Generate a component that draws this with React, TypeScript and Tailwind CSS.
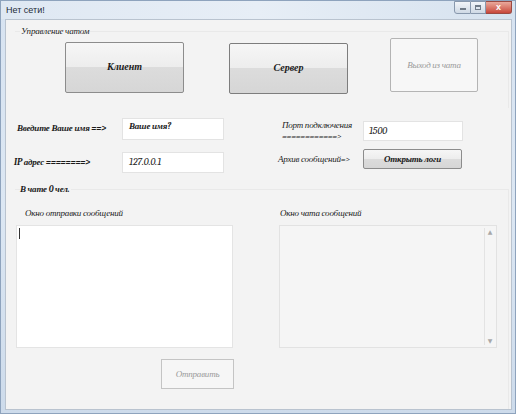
export default function App() {
  const serif = "font-serif italic";
  const label = "font-serif italic text-[9px] tracking-[-0.2px] leading-[11px] whitespace-nowrap";
  const btnBg = "bg-[linear-gradient(#f6f6f6_0%,#ededed_48%,#dcdcdc_50%,#d6d6d6_100%)]";
  return (
    <div className="w-[516px] h-[414px] overflow-hidden bg-gradient-to-b from-[#d7e3f1] via-[#dce7f3] to-[#cddbeb] flex flex-col border border-[#8ea3bd]">
      {/* title bar */}
      <div className="h-[18px] flex items-start justify-between pl-[5px] pr-[3px] bg-gradient-to-r from-[#dfe8f3] via-[#e7eef6] to-[#d6e2ef]">
        <span className="mt-[4px] text-[9px] leading-[10px] text-[#1e2a38] font-['Liberation_Sans',sans-serif]">Нет сети!</span>
        <div className="flex">
          <div className="w-[17px] h-[13px] border border-[#8898ad] rounded-bl-[3px] bg-gradient-to-b from-[#f2f5f9] to-[#cfd9e5] flex items-center justify-center">
            <div className="w-[6px] h-[2px] bg-[#707b88] mt-[3px]" />
          </div>
          <div className="w-[15px] h-[13px] border-y border-r border-[#8898ad] bg-gradient-to-b from-[#f2f5f9] to-[#cfd9e5] flex items-center justify-center">
            <div className="w-[6px] h-[5px] border border-[#707b88] border-t-2" />
          </div>
          <div className="w-[26px] h-[13px] border-y border-r border-[#9b4a42] rounded-br-[3px] bg-gradient-to-b from-[#e9a99c] to-[#c7453a] flex items-center justify-center text-white text-[9px] font-bold leading-none font-['Liberation_Sans',sans-serif]">
            x
          </div>
        </div>
      </div>

      {/* client area */}
      <div className="flex-1 ml-[4px] mr-[3px] mb-[3px] bg-[#f3f3f3] border border-[#b9c3cf] flex flex-col text-[#1a1a1a]">
        {/* group: управление */}
        <div className="relative mt-[11px] ml-[9px] mr-[2px] h-[77px] border-t border-r border-[#e9e9e9]">
          <span className={`absolute -top-[6px] left-[5px] px-[1px] bg-[#f3f3f3] ${label}`}>Управление чатом</span>
          <div className="flex items-start pt-[10px]">
            <button className={`ml-[50px] w-[119px] h-[51px] rounded-[2px] border border-[#8c8c8c] ${btnBg} text-[10px] font-bold ${serif}`}>
              Клиент
            </button>
            <button className={`ml-[45px] mt-[1px] w-[119px] h-[51px] rounded-[2px] border border-[#7d7d7d] ${btnBg} text-[10px] font-bold ${serif}`}>
              Сервер
            </button>
            <button className={`ml-[42px] -mt-[4px] w-[88px] h-[54px] rounded-[2px] border border-[#b4b4b4] bg-[#f7f7f7] text-[#9a9a9a] ${label}`}>
              Выход из чата
            </button>
          </div>
        </div>

        {/* connection settings */}
        <div className="flex mt-[9px]">
          <div className="flex flex-col">
            <div className="flex items-center h-[23px]">
              <span className={`ml-[11px] w-[105px] font-bold ${label}`}>Введите Ваше имя ==&gt;</span>
              <div className={`w-[102px] h-[22px] bg-white border border-[#e3e3e3] px-[6px] pt-[2px] font-bold ${label}`}>Ваше имя?</div>
            </div>
            <div className="flex items-center h-[21px] mt-[12px]">
              <span className={`ml-[8px] w-[108px] font-bold ${label}`}>IP адрес ========&gt;</span>
              <div className={`w-[102px] h-[21px] bg-white border border-[#e3e3e3] px-[6px] flex items-center text-[10px] ${serif}`}>127.0.0.1</div>
            </div>
          </div>
          <div className="flex flex-col ml-[58px]">
            <div className="flex items-center h-[20px] mt-[4px]">
              <span className={`w-[81px] ${label} leading-[9px]`}>
                Порт подключения
                <br />
                ============&gt;
              </span>
              <div className={`w-[100px] h-[20px] bg-white border border-[#e3e3e3] px-[5px] flex items-center text-[10px] ${serif}`}>1500</div>
            </div>
            <div className="flex items-center h-[20px] mt-[8px]">
              <span className={`-ml-[4px] w-[85px] ${label}`}>Архив сообщений=&gt;</span>
              <button className={`w-[99px] h-[20px] rounded-[2px] border border-[#8c8c8c] ${btnBg} font-bold ${label}`}>
                Открыть логи
              </button>
            </div>
          </div>
        </div>

        {/* group: chat */}
        <div className="relative mt-[16px] ml-[9px] mr-[2px] flex-1 border-t border-r border-[#e9e9e9]">
          <span className={`absolute -top-[6px] left-[5px] pr-[2px] bg-[#f3f3f3] font-bold ${label}`}>В чате 0 чел.</span>
          <div className="flex">
            <div className="flex flex-col">
              <span className={`ml-[10px] mt-[18px] ${label}`}>Окно отправки сообщений</span>
              <div className="ml-[1px] mt-[6px] w-[217px] h-[123px] bg-white border border-[#e4e4e4] pl-[2px] pt-[2px]">
                <div className="w-[1px] h-[11px] bg-[#333]" />
              </div>
              <button className={`ml-[146px] mt-[11px] w-[73px] h-[30px] border border-[#c4c4c4] bg-[#f6f6f6] text-[#9a9a9a] ${label}`}>
                Отправить
              </button>
            </div>
            <div className="flex flex-col ml-[45px]">
              <span className={`ml-[1px] mt-[18px] ${label}`}>Окно чата сообщений</span>
              <div className="mt-[6px] w-[218px] h-[123px] bg-[#f5f5f5] border border-[#e2e2e2] flex justify-end">
                <div className="w-[11px] my-[2px] mr-[1px] border-l border-[#e3e3e3] flex flex-col items-center justify-between text-[6px] leading-[8px] text-[#a8a8a8] font-['DejaVu_Sans',sans-serif]">
                  <span>▲</span>
                  <span>▼</span>
                </div>
              </div>
            </div>
          </div>
        </div>
      </div>
    </div>
  );
}
